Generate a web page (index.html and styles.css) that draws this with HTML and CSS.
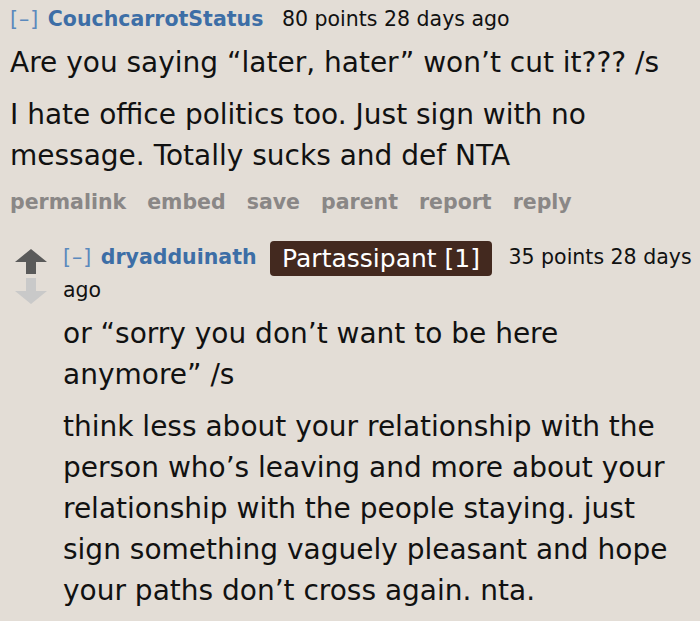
FILE: index.html
```html
<!DOCTYPE html>
<html>
<head>
<meta charset="utf-8">
<link rel="stylesheet" href="styles.css">
</head>
<body>
<div class="comment">
  <div class="tagline">
    <span class="expand">[–]</span>
    <span class="author">CouchcarrotStatus</span>
    <span class="score">80 points 28 days ago</span>
  </div>
  <div class="md">
    <p>Are you saying “later, hater” won’t cut it??? /s</p>
    <p>I hate office politics too. Just sign with no message. Totally sucks and def NTA</p>
  </div>
  <ul class="buttons">
    <li>permalink</li>
    <li>embed</li>
    <li>save</li>
    <li>parent</li>
    <li>report</li>
    <li>reply</li>
  </ul>
  <div class="child">
    <div class="arrows">
      <svg class="arrow" width="32" height="25" viewBox="0 0 32 25"><path d="M16 0 L32 13 L21 13 L21 25 L11 25 L11 13 L0 13 Z" fill="#5a5a5a"/></svg>
      <svg class="arrow" width="32" height="26" viewBox="0 0 32 26"><path d="M11 0 L21 0 L21 13 L32 13 L16 26 L0 13 L11 13 Z" fill="#c9c9c9"/></svg>
    </div>
    <div class="entry">
      <div class="tagline child-tagline">
        <span class="expand">[–]</span>
        <span class="author child-author">dryadduinath</span>
        <span class="flair">Partassipant [1]</span>
        <span class="score">35 points 28 days ago</span>
      </div>
      <div class="md child-md">
        <p>or “sorry you don’t want to be here anymore” /s</p>
        <p>think less about your relationship with the person who’s leaving and more about your relationship with the people staying. just sign something vaguely pleasant and hope your paths don’t cross again. nta.</p>
      </div>
    </div>
  </div>
</div>
</body>
</html>
```

FILE: styles.css
```css
html, body {
  margin: 0;
  padding: 0;
  background: #e3ddd6;
}
body {
  font-family: "DejaVu Sans", Verdana, sans-serif;
  color: #111;
  width: 700px;
  height: 621px;
  overflow: hidden;
}
.comment {
  padding: 4px 0 0 10px;
}
.tagline {
  font-size: 20.5px;
  line-height: 30px;
}
.expand {
  color: #5b89bd;
  letter-spacing: 1px;
  margin-right: 2px;
}
.author {
  color: #3d6ea6;
  font-weight: bold;
  margin-right: 12px;
}
.score {
  color: #111;
}
.md {
  margin-top: 8px;
}
.md p {
  margin: 0 0 11px 0;
  font-size: 28px;
  line-height: 41px;
}
.buttons {
  list-style: none;
  margin: 1px 0 0 0;
  padding: 0;
  display: flex;
  gap: 21px;
  font-size: 20.5px;
  font-weight: bold;
  color: #8a8786;
  line-height: 30px;
}
.child {
  display: flex;
  margin-top: 24px;
}
.arrows {
  width: 53px;
  flex: none;
  display: flex;
  flex-direction: column;
  gap: 4px;
  padding-top: 8px;
  padding-left: 5px;
  box-sizing: border-box;
}
.entry {
  flex: 1;
  padding-right: 0;
}
.child-tagline {
  line-height: 32px;
}
.child-author {
  margin-right: 7px;
}
.flair {
  display: inline-block;
  vertical-align: middle;
  background: #43291f;
  color: #fff;
  font-size: 25px;
  line-height: 35px;
  margin: -2px 10px -2px 0;
  padding: 0 12px;
  border-radius: 4px;
}
.child-md {
  margin-top: 7px;
}
```
